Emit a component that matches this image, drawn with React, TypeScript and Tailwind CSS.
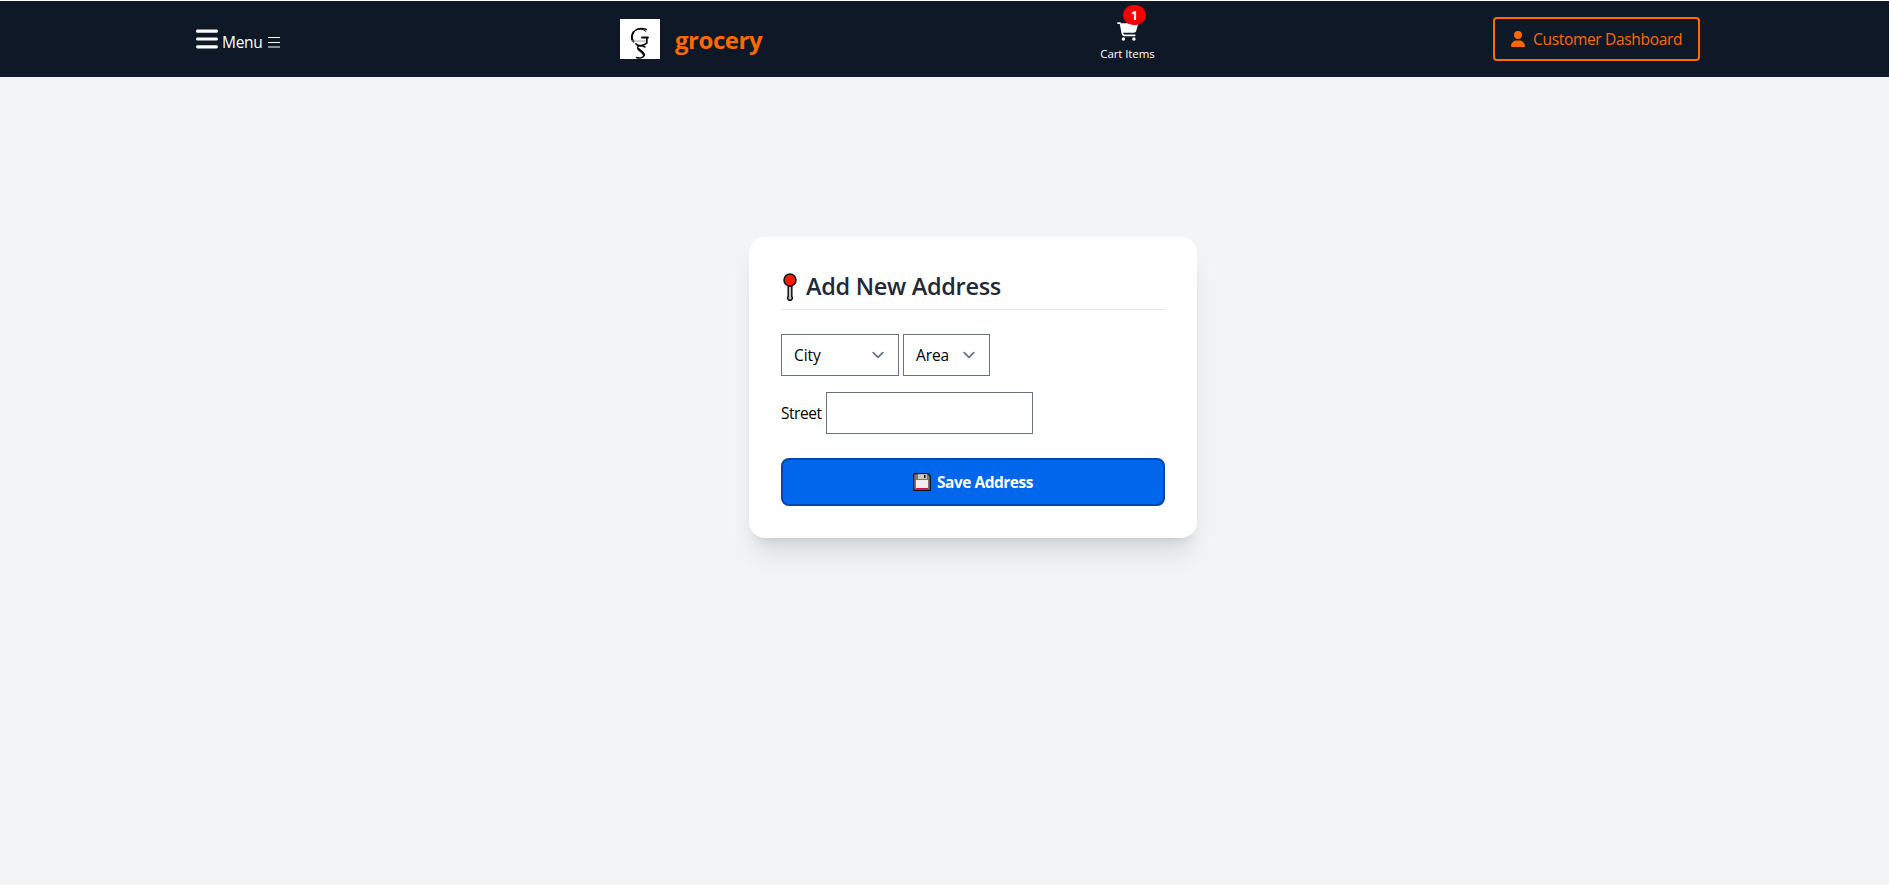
import React from 'react';
import { FaBars, FaCartShopping, FaUser } from 'react-icons/fa6';

function Logo() {
  return (
    <svg className="h-10 w-10 shrink-0 bg-white" viewBox="0 0 40 40" fill="none" stroke="#0a0a0a" strokeLinecap="round">
      <path d="M26 12.500C23 9.500 17 9 14 13C11.500 16.500 11 20 13 22" strokeWidth="1" />
      <path d="M13.500 13C11.300 16.500 11.300 20 13.500 22.500" strokeWidth="2" />
      <path d="M15 11.500C18 9.300 23 9.300 26.500 10.500" strokeWidth="1.500" />
      <path d="M22 18.500H28M26.800 18.500V24C24 27 18 27.500 16 25" strokeWidth="1.800" />
      <path d="M12 22H26" stroke="#999" strokeWidth="1.200" strokeDasharray="1 1" />
      <path d="M25 28C20 25.500 16.500 27 18 29.500C19.500 32 24.500 33 24 36.500C23.500 39 19 39.500 16.500 38.500" strokeWidth="1.400" />
      <path d="M18.500 30C20 32 23.500 33 24 36" strokeWidth="2.400" />
    </svg>
  );
}

function PinIcon() {
  return (
    <svg className="mr-[8px] h-7 w-4 shrink-0" viewBox="0 0 16 28">
      <path d="M6.200 13V23.500A2.300 2.300 0 1 0 9.800 23.500V13Z" fill="#c4c4c4" stroke="#111" strokeWidth="1.500" />
      <circle cx="8" cy="7" r="6" fill="#ff1a00" stroke="#111" strokeWidth="1.500" />
    </svg>
  );
}

function FloppyIcon() {
  return (
    <svg className="mr-[6px] h-[18px] w-[18px] shrink-0" viewBox="0 0 18 18">
      <path d="M.7.7H15L17.300 3V17.300H.7Z" fill="#777" stroke="#111" strokeWidth="1.200" />
      <path d="M5 1.200H14V6H5Z" fill="#c8c8c8" />
      <path d="M11 2H12.500V5H11Z" fill="#111" />
      <path d="M3 7H15V15H3Z" fill="#eee" />
      <path d="M3 15H15V16.600H3Z" fill="#d8104a" />
    </svg>
  );
}

function SelectBox({ label, className }: { label: string; className: string }) {
  return (
    <button type="button" className={`flex h-[42px] items-center justify-between border border-[#6b7280] bg-white pl-[12px] pr-[10px] text-[15.500px] text-black ${className}`}>
      <span className="pt-[2px] tracking-[-0.1px]">{label}</span>
      <svg className="-mr-[2px] h-6 w-6" viewBox="0 0 20 20" fill="none" stroke="#6b7280" strokeWidth="1.500" strokeLinecap="round" strokeLinejoin="round">
        <path d="m6 8 4 4 4-4" />
      </svg>
    </button>
  );
}

export default function App() {
  return (
    <div className="flex h-[885px] flex-col bg-[#f3f4f6] font-['Open_Sans',sans-serif]">
      <header className="flex h-[77px] shrink-0 border-t border-white bg-[#0f1826] text-white">
        <div className="flex w-[424px] pl-[196px]">
          <FaBars className="mt-[25px] h-[26px] w-[22px]" />
          <span className="ml-[4px] mt-[29px] text-[15.500px] leading-6 tracking-[-0.3px]">Menu</span>
          <svg className="ml-[6px] mt-[35px] h-3 w-3" viewBox="0 0 12 12" stroke="#fff" strokeWidth="1.200">
            <path d="M0 1.500H12M0 6.500H12M0 11H12" />
          </svg>
        </div>
        <div className="flex w-[676px] pl-[196px]">
          <div className="mt-[18px]"><Logo /></div>
          <span className="ml-[15px] mt-[23px] text-[24px] font-bold leading-8 tracking-[-0.45px] text-[#ff6a00]">grocery</span>
        </div>
        <div className="relative flex w-[55px] shrink-0 flex-col items-center">
          <FaCartShopping className="mt-[21px] h-[19px] w-[21px]" />
          <span className="absolute left-[23px] top-[4px] flex h-5 w-[23px] items-center justify-center rounded-full bg-[#f40000] pt-px text-[12px] font-bold">1</span>
          <span className="mt-[5px] whitespace-nowrap text-[11.500px] leading-4 tracking-[-0.1px]">Cart Items</span>
        </div>
        <button type="button" className="ml-auto mr-[189px] mt-4 flex h-11 w-[207px] items-center rounded-[4px] border-2 border-[#ff6a00] pl-4 text-[15.500px] text-[#ff6a00]">
          <FaUser className="h-4 w-[14px]" />
          <span className="ml-2 whitespace-nowrap pt-px tracking-[-0.32px]">Customer Dashboard</span>
        </button>
      </header>
      <main className="flex pl-[749px] pt-40">
        <form className="w-[448px] rounded-2xl bg-white p-8 shadow-xl">
          <h2 className="flex h-[41px] items-start border-b border-[#e5e7eb] text-[23.500px] font-semibold leading-8 text-[#1f2937]">
            <span className="mt-1 flex pl-[1px]"><PinIcon /></span>
            <span className="whitespace-nowrap pt-px tracking-[-0.3px]">Add New Address</span>
          </h2>
          <div className="mt-6 flex gap-1">
            <SelectBox label="City" className="w-[118px]" />
            <SelectBox label="Area" className="w-[87px]" />
          </div>
          <label className="mt-4 flex items-center text-[15.500px] text-black">
            <span className="w-[45px] pt-[2px] tracking-[-0.45px]">Street</span>
            <input className="h-[42px] w-[207px] border border-[#6b7280] bg-white px-3 outline-none" />
          </label>
          <button type="button" className="mt-6 flex h-12 w-full items-center justify-center rounded-lg border-2 border-[#0644b0] bg-[#0066eb] text-[15.500px] font-bold text-white">
            <FloppyIcon />
            <span className="pt-[2px] tracking-[-0.5px]">Save Address</span>
          </button>
        </form>
      </main>
    </div>
  );
}
